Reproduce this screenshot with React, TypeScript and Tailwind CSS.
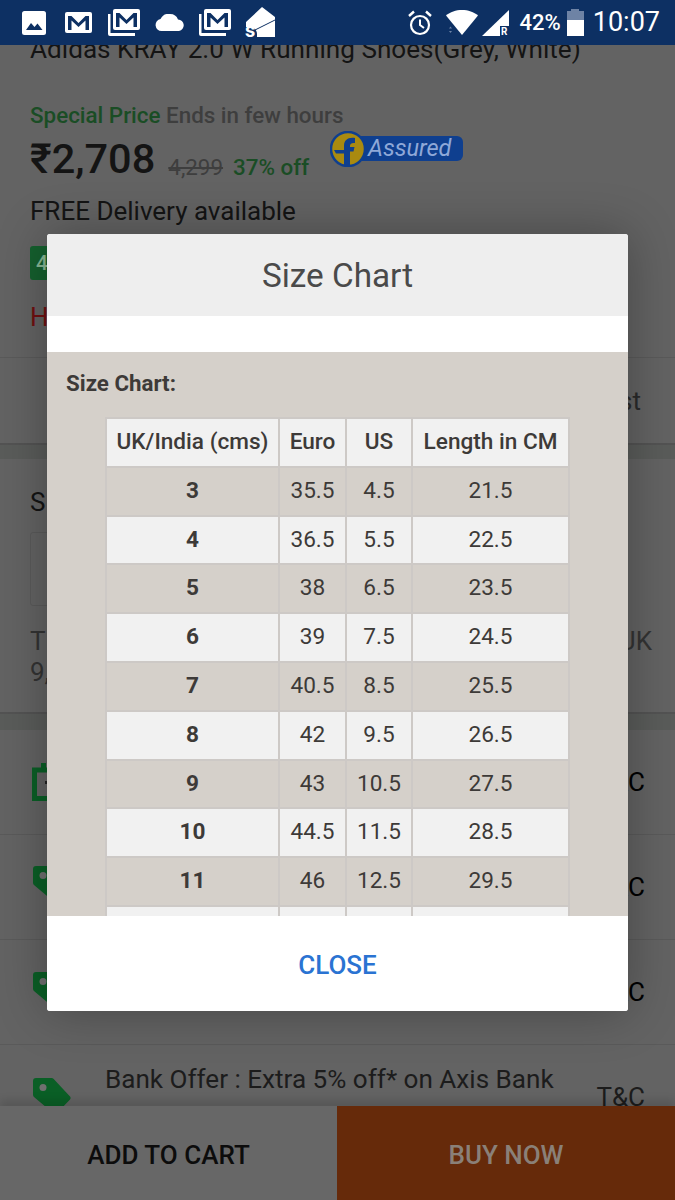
import React from 'react';

const rows = [
  ['3', '35.5', '4.5', '21.5'],
  ['4', '36.5', '5.5', '22.5'],
  ['5', '38', '6.5', '23.5'],
  ['6', '39', '7.5', '24.5'],
  ['7', '40.5', '8.5', '25.5'],
  ['8', '42', '9.5', '26.5'],
  ['9', '43', '10.5', '27.5'],
  ['10', '44.5', '11.5', '28.5'],
  ['11', '46', '12.5', '29.5'],
];

const cellBorder = 'border-2 border-[#cdc9c6] px-0 pt-0 pb-[1px] text-center';

const GmailIcon = () => (
  <svg width="27" height="21" viewBox="0 0 27 21">
    <rect x="0" y="0" width="27" height="21" rx="2" fill="#fff" />
    <path d="M3 4h3.5l7 7 7-7H24v14h-3.5V8.5l-7 6.5-7-6.5V18H3z" fill="#0d3063" />
  </svg>
);

const StackedGmailIcon = () => (
  <svg width="33" height="27" viewBox="0 0 33 27">
    <path d="M0 5h2.500v19H27v3H2a2 2 0 0 1-2-2z" fill="#fff" />
    <rect x="5" y="0" width="27" height="21" rx="2" fill="#fff" />
    <path d="M8 4h3.500l7 7 7-7H29v14h-3.500V8.500l-7 6.500-7-6.500V18H8z" fill="#0d3063" />
  </svg>
);

const TagIcon = ({ className }: { className: string }) => (
  <svg className={className} width="38" height="36" viewBox="0 0 38 36">
    <path d="M3 0h15.500a3 3 0 0 1 2.200 1L37 18.500a2.500 2.500 0 0 1-.2 3.300L24 35a3 3 0 0 1-4 0L1 19a3 3 0 0 1-1-2.200V3a3 3 0 0 1 3-3z" fill="#0a5f26" />
    <circle cx="10" cy="9.500" r="3.500" fill="#707070" />
  </svg>
);

const OfferRow = ({ top }: { top: React.ReactNode }) => (
  <div className="h-[105px] border-b border-[#5a5a5a] relative">{top}</div>
);

export default function App() {
  return (
    <div className="relative w-[675px] h-[1200px] overflow-hidden bg-[#636363] font-['Roboto',sans-serif]">
      {/* status bar */}
      <div className="relative z-10 h-[45px] bg-[#0d3063] flex items-center text-white">
        <div className="flex items-center pl-[22px]">
          <svg className="mr-[19px]" width="24" height="24" viewBox="0 0 24 24">
            <rect width="24" height="24" rx="2.500" fill="#fff" />
            <path d="M4 19l5-7 3.500 4 3-3.500L20.500 19z" fill="#0d3063" />
          </svg>
          <div className="mr-[16px]"><GmailIcon /></div>
          <div className="mr-[14px]"><StackedGmailIcon /></div>
          <svg className="mr-[14px]" width="30" height="17" viewBox="0 0 30 17">
            <path d="M6.500 17a6 6 0 0 1-1-11.900A9 9 0 0 1 15 0a8.500 8.500 0 0 1 8 5.500A5.800 5.800 0 0 1 24 17z" fill="#fff" />
          </svg>
          <div className="mr-[13px]"><StackedGmailIcon /></div>
          <svg width="32" height="32" viewBox="0 0 32 32">
            <path d="M17 0l13 10v20H12v-3c0-4-3-7-7-7H1v-5z" fill="#fff" />
            <path d="M10 23l20-10" stroke="#0d3063" strokeWidth="1" fill="none" />
            <text x="0" y="30" fontSize="20" fontWeight="700" fill="#fff" fontFamily="Roboto, sans-serif">s</text>
          </svg>
        </div>
        <div className="ml-auto flex items-center pr-[15px]">
          <svg className="mr-[13px]" width="26" height="26" viewBox="0 0 26 26" fill="none" stroke="#fff">
            <circle cx="13" cy="15" r="9" strokeWidth="2.200" />
            <path d="M13 9.500V15l4 3" strokeWidth="2" />
            <path d="M2 6l5-4.500M24 6l-5-4.500" strokeWidth="2.400" />
          </svg>
          <svg className="mr-[4px]" width="32" height="25" viewBox="0 0 32 25">
            <path d="M0 5.500C4 2 10 0 16 0s12 2 16 5.500L16 25z" fill="#fff" />
            <path d="M3 18.500l1.500-2 1.500 2zM3 21l1.500 2 1.500-2z" fill="#6e83a5" />
          </svg>
          <svg className="mr-[11px]" width="27" height="26" viewBox="0 0 27 26">
            <path d="M0 26L27 0v26z" fill="#fff" />
            <rect x="18" y="16" width="9" height="10" fill="#0d3063" />
            <text x="19" y="25" fontSize="10" fontWeight="700" fill="#fff" fontFamily="Roboto, sans-serif">R</text>
          </svg>
          <span className="text-[22px] leading-none font-medium mr-[6px]">42%</span>
          <div className="w-[17px] h-[27px] mr-[9px] flex flex-col items-center">
            <div className="w-[8px] h-[2px] bg-[#6e83a5]" />
            <div className="w-full h-[9px] bg-[#6e83a5]" />
            <div className="w-full flex-1 bg-white" />
          </div>
          <span className="text-[27px] leading-none">10:07</span>
        </div>
      </div>

      {/* dimmed product page */}
      <div className="pl-[30px] -mt-[11px] text-[#141414]">
        <div className="text-[26.150px] leading-[30px]">Adidas KRAY 2.0 W Running Shoes(Grey, White)</div>
        <div className="mt-[37px] text-[22.400px] leading-[28px] font-medium text-[#1a4d25]">
          Special Price <span className="text-[#3e3e3e]">Ends in few hours</span>
        </div>
        <div className="flex items-start h-[58px] mt-[5px]">
          <span className="text-[41.500px] leading-[50px] font-medium">₹2,708</span>
          <span className="text-[22.400px] leading-[26px] mt-[20px] ml-[13px] line-through text-[#3e3e3e]">4,299</span>
          <span className="text-[22.400px] leading-[26px] mt-[20px] ml-[10px] font-medium text-[#1a4d25]">37% off</span>
          <div className="relative ml-[21px] -mt-[3px] w-[133px] h-[36px]">
            <div className="absolute left-[10px] top-[5px] w-[123px] h-[25px] rounded-[6px] bg-[#0f3f8f] text-[#8ea8d8] italic text-[23.500px] leading-[25px] pl-[28px]">Assured</div>
            <svg className="absolute left-0 top-0" width="36" height="36" viewBox="0 0 36 36">
              <circle cx="18" cy="18" r="17" fill="#a98a10" stroke="#0f3f8f" strokeWidth="2.500" />
              <path d="M14 34V15c0-6 4-9 11-8v5c-3-.5-5 .5-5 3v1h4.500l-1 4.500H20V34z" fill="#0f3f8f" />
              <path d="M4 19h10v3.500H6z" fill="#0f3f8f" />
            </svg>
          </div>
        </div>
        <div className="text-[26px] leading-[30px] mt-[4px]">FREE Delivery available</div>
        <div className="w-[40px] h-[34px] rounded-[3px] bg-[#15602e] mt-[20px] text-[21px] leading-[34px] pl-[6px] text-[#88b894] font-medium">4</div>
        <div className="text-[26px] leading-[30px] mt-[22px] text-[#701010]">H</div>
      </div>

      <div className="mt-[25px] border-t border-[#5a5a5a] h-[86px] relative">
        <span className="absolute right-[34px] top-[28px] text-[26px] leading-[30px] text-[#2a2a2a]">st</span>
      </div>
      <div className="h-[16px] bg-[#5a5c5a] border-t-2 border-[#535353]" />

      <div className="h-[253px] pl-[30px] relative">
        <div className="text-[26px] leading-[30px] pt-[28px] text-[#141414]">S</div>
        <div className="w-[60px] h-[74px] mt-[15px] border border-[#5a5a5a] rounded-[3px]" />
        <div className="mt-[20px] text-[26px] leading-[31px] text-[#333333]">T<br />9,</div>
        <span className="absolute right-[23px] top-[167px] text-[26px] leading-[31px] text-[#333333]">UK</span>
      </div>
      <div className="h-[18px] bg-[#5a5c5a] border-t-2 border-[#535353]" />

      {/* offers */}
      <OfferRow top={
        <>
          <svg className="absolute left-[32px] top-[33px]" width="36" height="38" viewBox="0 0 36 38" fill="none">
            <path d="M2.500 7h31v28.500h-31z" stroke="#0a5f26" strokeWidth="5" />
            <rect x="9" y="0" width="5" height="7" fill="#0a5f26" />
            <rect x="13" y="18" width="6" height="3" fill="#222" />
          </svg>
          <span className="absolute right-[30px] top-[37px] text-[26px] leading-[30px]">T&amp;C</span>
        </>
      } />
      <OfferRow top={
        <>
          <TagIcon className="absolute left-[33px] top-[31px]" />
          <span className="absolute right-[30px] top-[37px] text-[26px] leading-[30px]">T&amp;C</span>
        </>
      } />
      <OfferRow top={
        <>
          <TagIcon className="absolute left-[33px] top-[32px]" />
          <span className="absolute right-[30px] top-[37px] text-[26px] leading-[30px]">T&amp;C</span>
        </>
      } />
      <div className="relative h-[61px] overflow-hidden text-[#1c1c1c]">
        <TagIcon className="absolute left-[33px] top-[33px]" />
        <div className="absolute left-[105px] top-[15px] w-[470px] text-[26.100px] leading-[38px]">
          Bank Offer : Extra 5% off* on Axis Bank<br />Buzz Credit Card
        </div>
        <span className="absolute right-[30px] top-[37px] text-[26px] leading-[30px]">T&amp;C</span>
      </div>

      {/* bottom bar */}
      <div className="flex h-[94px] relative z-10 text-[26px] font-medium shadow-[0_-6px_8px_rgba(0,0,0,0.12)]">
        <div className="w-[337px] bg-[#676767] flex items-center justify-center pt-[4px] text-[#0c0c0c]">ADD TO CART</div>
        <div className="flex-1 bg-[#662a0a] flex items-center justify-center pt-[4px] text-[#8a8078]">BUY NOW</div>
      </div>

      {/* size chart dialog */}
      <div className="absolute z-20 left-[47px] top-[234px] w-[581px] h-[777px] rounded-[3px] overflow-hidden flex flex-col bg-white shadow-[0_0_50px_rgba(0,0,0,0.3)]">
        <div className="h-[82px] shrink-0 bg-[#eeeeee] flex items-center justify-center pt-[2px] text-[33.300px] text-[#4a4a4a]">Size Chart</div>
        <div className="h-[36px] shrink-0 bg-white" />
        <div className="flex-1 min-h-0 overflow-hidden bg-[#d5d0ca] text-[#3d3a38]">
          <div className="pl-[19px] pt-[18px] text-[22.300px] leading-[27px] font-bold">Size Chart:</div>
          <table className="ml-[58px] mt-[20px] w-[463px] table-fixed border-collapse text-[22.600px]">
            <colgroup>
              <col className="w-[173px]" />
              <col className="w-[67px]" />
              <col className="w-[66px]" />
              <col className="w-[157px]" />
            </colgroup>
            <thead>
              <tr className="h-[48.800px] bg-[#f1f1f1] font-medium">
                <th className={`${cellBorder} font-medium`}>UK/India (cms)</th>
                <th className={`${cellBorder} font-medium`}>Euro</th>
                <th className={`${cellBorder} font-medium`}>US</th>
                <th className={`${cellBorder} font-medium`}>Length in CM</th>
              </tr>
            </thead>
            <tbody>
              {rows.map((r, i) => (
                <tr key={r[0]} className={i % 2 === 0 ? 'h-[48.800px]' : 'h-[48.800px] bg-[#f1f1f1]'}>
                  <td className={`${cellBorder} font-bold`}>{r[0]}</td>
                  <td className={cellBorder}>{r[1]}</td>
                  <td className={cellBorder}>{r[2]}</td>
                  <td className={cellBorder}>{r[3]}</td>
                </tr>
              ))}
              <tr className="h-[48.800px] bg-[#f1f1f1]">
                <td className={cellBorder} />
                <td className={cellBorder} />
                <td className={cellBorder} />
                <td className={cellBorder} />
              </tr>
            </tbody>
          </table>
        </div>
        <div className="h-[95px] shrink-0 bg-white flex items-center justify-center pt-[3px] text-[26px] font-medium text-[#2a73d2]">CLOSE</div>
      </div>
    </div>
  );
}
